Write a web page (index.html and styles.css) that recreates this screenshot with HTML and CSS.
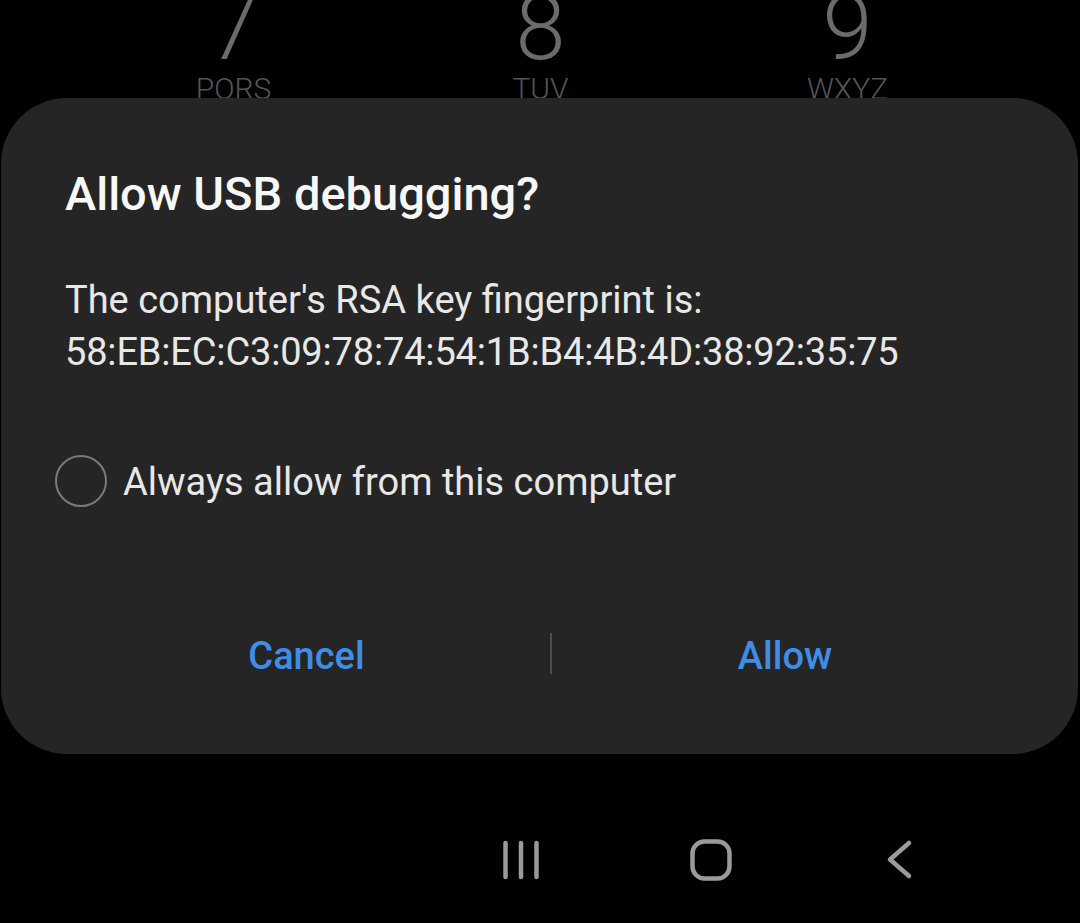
FILE: index.html
```html
<!DOCTYPE html>
<html>
<head>
<meta charset="utf-8">
<link rel="stylesheet" href="styles.css">
</head>
<body>
<div class="screen">
  <div class="keypad">
    <div class="key"><div class="digit">7</div><div class="letters">PQRS</div></div>
    <div class="key"><div class="digit">8</div><div class="letters">TUV</div></div>
    <div class="key"><div class="digit">9</div><div class="letters">WXYZ</div></div>
  </div>
  <div class="dialog">
    <div class="title">Allow USB debugging?</div>
    <div class="message">The computer's RSA key fingerprint is:<br><span class="message-2">58:EB:EC:C3:09:78:74:54:1B:B4:4B:4D:38:92:35:75</span></div>
    <div class="check-row">
      <span class="radio"></span>
      <span class="check-label">Always allow from this computer</span>
    </div>
    <div class="buttons">
      <div class="btn btn-left">Cancel</div>
      <div class="divider"></div>
      <div class="btn btn-right">Allow</div>
    </div>
  </div>
  <div class="navbar">
    <div class="nav-slot">
      <svg width="44" height="44" viewBox="0 0 44 44"><g stroke="#9a9a9a" stroke-width="4.5" stroke-linecap="round" fill="none"><line x1="6.5" y1="5" x2="6.5" y2="39"/><line x1="22" y1="5" x2="22" y2="39"/><line x1="37.5" y1="5" x2="37.5" y2="39"/></g></svg>
    </div>
    <div class="nav-slot">
      <svg width="44" height="44" viewBox="0 0 44 44"><rect x="3.5" y="3.5" width="37" height="37" rx="12" ry="12" stroke="#9a9a9a" stroke-width="4.5" fill="none"/></svg>
    </div>
    <div class="nav-slot">
      <svg width="44" height="44" viewBox="0 0 44 44"><polyline points="30,5 11,21.5 30,38" stroke="#9a9a9a" stroke-width="4.5" stroke-linecap="round" stroke-linejoin="round" fill="none"/></svg>
    </div>
  </div>
</div>
</body>
</html>
```

FILE: styles.css
```css
html, body {
  margin: 0;
  padding: 0;
  background: #000;
}
body {
  font-family: Roboto, "Noto Sans", sans-serif;
}
.screen {
  width: 1080px;
  height: 923px;
  overflow: hidden;
  background: #000;
}
.keypad {
  height: 98px;
  overflow: hidden;
  display: grid;
  grid-template-columns: 307px 307px 307px;
  padding-left: 80px;
}
.key {
  display: flex;
  flex-direction: column;
  align-items: center;
}
.digit {
  font-size: 90px;
  line-height: 76px;
  height: 76px;
  font-weight: 300;
  color: #6b6b6b;
  margin-top: -9px;
}
.letters {
  font-size: 30px;
  line-height: 30px;
  font-weight: 300;
  color: #555;
  margin-top: 7px;
}
.dialog {
  margin: 0 2px 0 1px;
  background: #252525;
  border-radius: 66px;
  padding: 68px 60px 72px 64px;
}
.title {
  font-size: 47px;
  line-height: 56px;
  font-weight: 500;
  color: #f7f7f7;
}
.message {
  margin-top: 52px;
  font-size: 38px;
  line-height: 52px;
  color: #e8e8e8;
}
.message-2 {
  letter-spacing: -0.17px;
}
.check-row {
  margin-top: 78px;
  margin-left: -10px;
  height: 52px;
  display: flex;
  align-items: center;
  gap: 16px;
}
.radio {
  width: 48px;
  height: 48px;
  border: 2.7px solid #7a7a7a;
  border-radius: 50%;
  flex: none;
  margin-top: -3px;
}
.check-label {
  font-size: 38px;
  line-height: 52px;
  color: #e8e8e8;
}
.buttons {
  margin-top: 122px;
  margin-left: -2px;
  height: 52px;
  display: flex;
  align-items: center;
}
.btn {
  text-align: center;
  font-size: 38px;
  line-height: 52px;
  font-weight: 500;
  color: #3f8de8;
}
.btn-left {
  width: 487px;
  flex: none;
}
.btn-right {
  flex: 1;
}
.divider {
  width: 2px;
  height: 41px;
  background: #4e4e4e;
  margin-top: -5px;
  flex: none;
}
.navbar {
  margin-top: 84px;
  height: 44px;
  display: flex;
  padding-left: 426px;
}
.nav-slot {
  width: 190px;
  display: flex;
  justify-content: center;
}
```
